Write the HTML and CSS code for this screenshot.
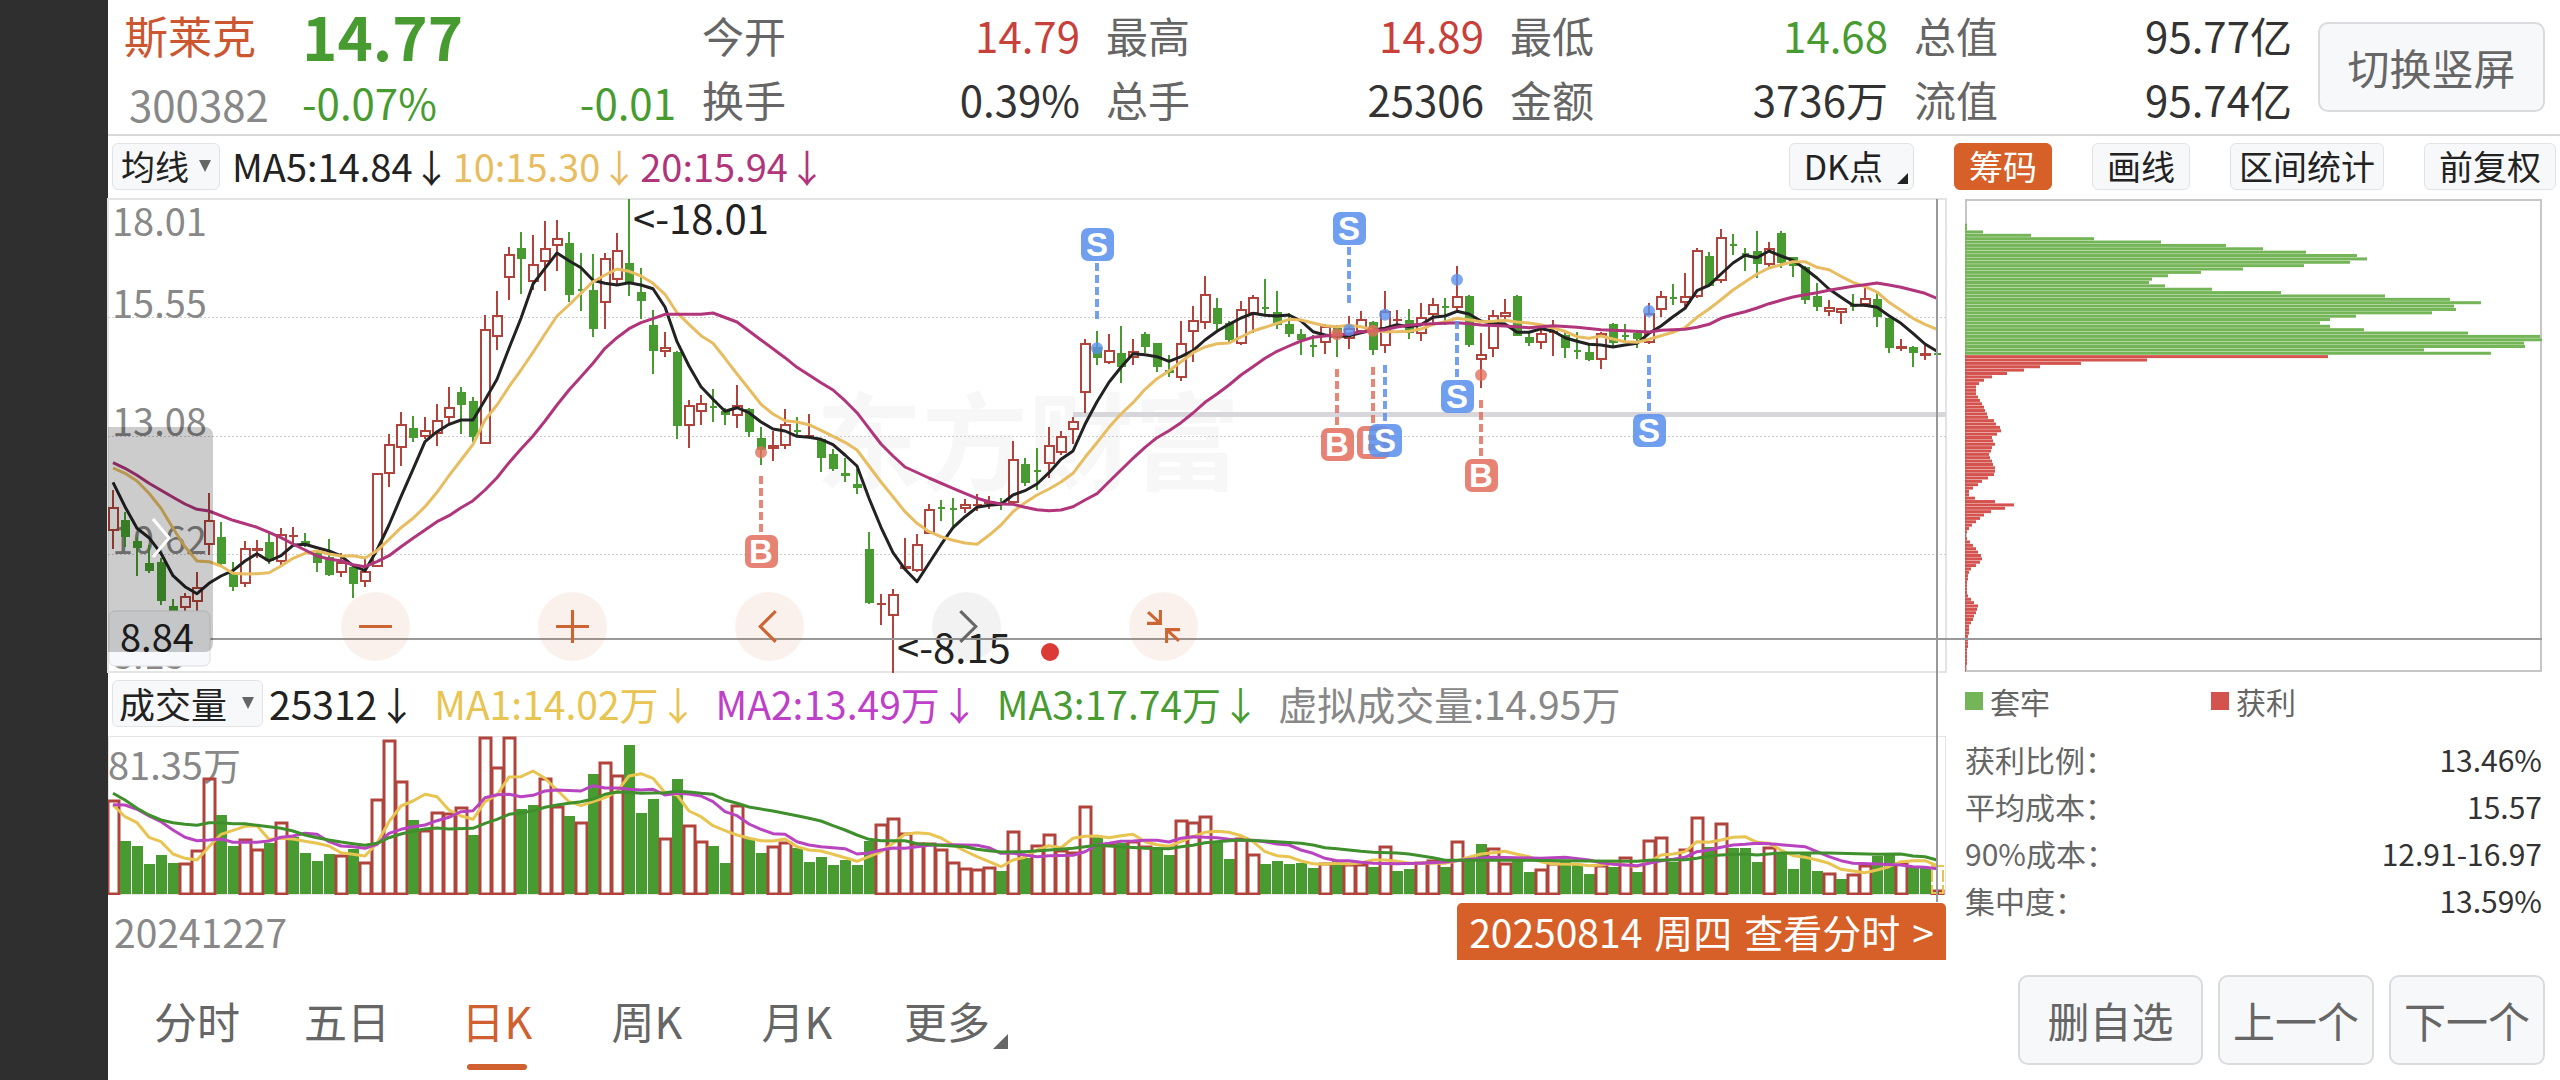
FILE: index.html
```
<!DOCTYPE html>
<html lang="zh-CN">
  <head>
    <meta charset="UTF-8" />
    <meta name="viewport" content="width=device-width, initial-scale=1.0" />
    <title>斯莱克 300382</title>
    <link rel="stylesheet" href="styles.css">
  </head>
  <body>
    <div class="edge"></div>
    <main class="page">
      <header class="quote">
        <div class="stock">
          <h1 class="name">斯莱克</h1>
          <span class="code">300382</span>
        </div>
        <div class="price down">
          <strong class="last">14.77</strong>
          <div class="change"><span>-0.07%</span><span>-0.01</span></div>
        </div>
        <div class="pair">
          <div class="cell"><span>今开</span><b class="up">14.79</b></div>
          <div class="cell"><span>换手</span><b>0.39%</b></div>
        </div>
        <div class="pair">
          <div class="cell"><span>最高</span><b class="up">14.89</b></div>
          <div class="cell"><span>总手</span><b>25306</b></div>
        </div>
        <div class="pair">
          <div class="cell"><span>最低</span><b class="down">14.68</b></div>
          <div class="cell"><span>金额</span><b>3736万</b></div>
        </div>
        <div class="pair">
          <div class="cell"><span>总值</span><b>95.77亿</b></div>
          <div class="cell"><span>流值</span><b>95.74亿</b></div>
        </div>
        <button class="btn rotate">切换竖屏</button>
      </header>

      <div class="toolbar">
        <span class="pick">
          <select class="chip" aria-label="主图指标"><option>均线</option></select>
        </span>
        <span class="ma">MA5:14.84↓</span>
        <span class="ma yellow">10:15.30↓</span>
        <span class="ma magenta">20:15.94↓</span>
        <div class="tools">
          <button class="chip dk">DK点</button>
          <button class="chip active">筹码</button>
          <button class="chip">画线</button>
          <button class="chip tight">区间统计</button>
          <button class="chip">前复权</button>
        </div>
      </div>

      <div class="board">
        <section class="charts">
          <div class="kline">
            <svg class="plot" id="kline" viewBox="0 0 1838 473"></svg>
            <div class="zoom">
              <button class="round" aria-label="缩小">
                <svg viewBox="0 0 34 34"><path d="M1 17H33" /></svg>
              </button>
              <button class="round" aria-label="放大">
                <svg viewBox="0 0 34 34"><path d="M1 17H33M17 1V33" /></svg>
              </button>
              <button class="round" aria-label="左移">
                <svg viewBox="0 0 34 34"><path d="M23 2L8 17L23 32" /></svg>
              </button>
              <button class="round off" aria-label="右移">
                <svg viewBox="0 0 34 34"><path d="M11 2L26 17L11 32" /></svg>
              </button>
              <button class="round" aria-label="收起">
                <svg viewBox="0 0 34 34"><path d="M2 3L14 14M14 1V14H1M32 31L20 20M20 33V20H33" /></svg>
              </button>
            </div>
            <button class="drawer" aria-label="展开侧栏">
              <svg viewBox="0 0 20 42"><path d="M2 2L18 21L2 40" /></svg>
            </button>
          </div>

          <div class="indicator">
            <span class="pick wide">
              <select class="chip" aria-label="副图指标"><option>成交量</option></select>
            </span>
            <span>25312↓</span>
            <span class="gold">MA1:14.02万↓</span>
            <span class="purple">MA2:13.49万↓</span>
            <span class="down">MA3:17.74万↓</span>
            <span class="grey">虚拟成交量:14.95万</span>
          </div>

          <svg class="plot" id="volume" viewBox="0 0 1838 159"></svg>

          <div class="dates">
            <span class="grey">20241227</span>
            <a class="detail" href="#"><span>20250814</span><span>周四</span><span>查看分时</span><span>&gt;</span></a>
          </div>
        </section>

        <aside class="chips">
          <svg class="plot" id="chips" viewBox="0 0 577 473"></svg>
          <div class="legend">
            <span class="key locked">套牢</span>
            <span class="key profit">获利</span>
          </div>
          <dl class="facts">
            <div><dt>获利比例：</dt><dd>13.46%</dd></div>
            <div><dt>平均成本：</dt><dd>15.57</dd></div>
            <div><dt>90%成本：</dt><dd>12.91-16.97</dd></div>
            <div><dt>集中度：</dt><dd>13.59%</dd></div>
          </dl>
        </aside>
      </div>

      <footer class="bottom">
        <nav class="tabs">
          <a href="#">分时</a>
          <a href="#">五日</a>
          <a href="#" class="current">日K</a>
          <a href="#">周K</a>
          <a href="#">月K</a>
          <a href="#" class="more">更多</a>
        </nav>
        <div class="actions">
          <button class="btn long">删自选</button>
          <button class="btn">上一个</button>
          <button class="btn">下一个</button>
        </div>
      </footer>
    </main>
    <script src="chart.js"></script>
  </body>
</html>
```
FILE: styles.css
```
* {
  box-sizing: border-box;
}
body {
  margin: 0;
  display: flex;
  min-height: 100vh;
  background: #fff;
  color: #222;
  font-family: "Noto Sans CJK SC", "Noto Sans", sans-serif;
  font-size: 38px;
  line-height: 1;
}
button,
select {
  font: inherit;
  color: inherit;
  margin: 0;
  padding: 0;
  cursor: pointer;
}
a {
  color: inherit;
  text-decoration: none;
}
.edge {
  flex: 0 0 108px;
  background: #2f2f2f;
}
.page {
  flex: 1;
  min-width: 0;
}
.up {
  color: #c8403a;
}
.down {
  color: #489b30;
}
.grey {
  color: #888;
}
.yellow {
  color: #e8bd62;
}
.gold {
  color: #e8c450;
}
.magenta {
  color: #b0357a;
}
.purple {
  color: #bf40c8;
}

/* quote header */
.quote {
  display: grid;
  grid-template-columns: 152px 374px repeat(4, minmax(0, 1fr)) 227px;
  column-gap: 26px;
  align-items: center;
  height: 136px;
  padding: 0 15px 0 16px;
  border-bottom: 2px solid #d8d8d8;
  font-size: 42px;
  white-space: nowrap;
}
.stock,
.price,
.pair {
  display: grid;
  grid-template-rows: 64px 64px;
  align-items: center;
}
.name {
  margin: 0;
  font-size: 44px;
  font-weight: 400;
  color: #cc5630;
}
.code {
  padding-left: 5px;
  padding-top: 10px;
  color: #888;
}
.last {
  font-size: 60px;
  font-weight: 700;
}
.change {
  display: flex;
  justify-content: space-between;
  padding-top: 6px;
}
.cell {
  display: flex;
  justify-content: space-between;
  color: #666;
}
.cell b {
  font-weight: 400;
  color: #333;
}
.cell b.up {
  color: #c8403a;
}
.cell b.down {
  color: #489b30;
}
.btn {
  width: 156px;
  height: 90px;
  border: 2px solid #d9dbde;
  border-radius: 10px;
  background: #f7f8fa;
  color: #666;
  font-size: 42px;
}
.rotate {
  width: 100%;
}
.long {
  width: 185px;
}

/* toolbar */
.toolbar {
  display: flex;
  align-items: center;
  gap: 2px;
  height: 63px;
  padding: 0 4px 3px;
  white-space: nowrap;
}
.chip {
  appearance: none;
  height: 47px;
  padding: 0 14px;
  border: 1px solid #e2e3e6;
  border-radius: 6px;
  background: #f7f8fa;
  font-size: 34px;
  line-height: 1;
}
.chip.active {
  border-color: #d75f28;
  background: #d75f28;
  color: #fff;
}
.chip.tight {
  padding: 0 8px;
}
.pick {
  display: grid;
  align-items: center;
  margin-right: 10px;
}
.pick .chip {
  grid-area: 1 / 1;
  width: 108px;
  padding: 0 8px;
}
.pick.wide .chip {
  width: 151px;
  padding: 0 6px;
  font-size: 36px;
}
.pick::after {
  content: "";
  grid-area: 1 / 1;
  justify-self: end;
  margin-right: 9px;
  border: 6px solid transparent;
  border-top: 12px solid #666;
  border-bottom: 0;
  pointer-events: none;
}
.tools {
  display: flex;
  gap: 40px;
  margin-left: auto;
}
.dk {
  display: flex;
  align-items: center;
  gap: 14px;
  padding-right: 5px;
}
.dk::after {
  content: "";
  align-self: flex-end;
  margin-bottom: 5px;
  border-left: 11px solid transparent;
  border-bottom: 11px solid #222;
}

/* charts */
.board {
  display: grid;
  grid-template-columns: minmax(0, 1fr) 577px;
  gap: 19px;
  padding-right: 18px;
}
.plot {
  display: block;
  width: 100%;
  font-size: 38px;
}
.kline {
  position: relative;
  z-index: 1;
}
#kline {
  overflow: visible;
}
.frame {
  fill: none;
  stroke: #e4e4e4;
  stroke-width: 2;
}
#chips .frame {
  stroke: #c6c6c6;
}
.gridline {
  stroke: #ccc;
  stroke-dasharray: 2 2;
}
.watermark {
  font-size: 106px;
  font-weight: 700;
  fill: #f7f7f7;
}
.support {
  fill: #d6d6db;
}
.axis {
  fill: #888;
}
.note {
  fill: #222;
}
.extreme {
  font-size: 40px;
}
.cross {
  stroke: #999;
  stroke-width: 2;
}
.rise {
  fill: none;
  stroke: #b0443c;
  stroke-width: 2;
}
.fall {
  fill: #489b30;
  stroke: #489b30;
  stroke-width: 2;
}
.bar-rise {
  fill: none;
  stroke: #b0443c;
  stroke-width: 3;
}
.bar-fall {
  fill: #489b30;
}
.line {
  fill: none;
  stroke-width: 3;
  stroke-linejoin: round;
}
.line.ma5 { stroke: #222; }
.line.ma10 { stroke: #e8bd62; }
.line.ma20 { stroke: #b0357a; }
.line.v1 { stroke: #e8c450; }
.line.v2 { stroke: #b944c0; }
.line.v3 { stroke: #3f8f2c; }
.tag {
  fill: #fff;
  font-family: "Liberation Sans", sans-serif;
  font-size: 33px;
  font-weight: 700;
  text-anchor: middle;
}
.buy { fill: #e4705f; stroke: #e4705f; }
.sell { fill: #5b91ee; stroke: #5b91ee; }
.lead {
  stroke-width: 4;
  stroke-dasharray: 8 4;
  opacity: 0.85;
}
.dot {
  stroke: none;
  opacity: 0.8;
}
.box {
  stroke: none;
  opacity: 0.87;
}
.alert {
  fill: #dc3a34;
}
.cursor {
  fill: #f7f8fb;
  stroke: #dcdde0;
}
.forecast {
  fill: none;
  stroke: #e8c450;
  stroke-width: 2;
  stroke-dasharray: 12 3;
}
.locked-bar { fill: #74b557; }
.profit-bar { fill: #d5534e; }

.zoom {
  position: absolute;
  left: 233px;
  bottom: 11px;
  display: flex;
  gap: 128px;
}
.round {
  width: 69px;
  height: 69px;
  padding: 17px;
  border: 0;
  border-radius: 50%;
  background: rgba(215, 95, 40, 0.09);
}
.round svg {
  display: block;
  fill: none;
  stroke: #cb6634;
  stroke-width: 3;
}
.round.off {
  background: rgba(0, 0, 0, 0.05);
}
.round.off svg {
  stroke: #666;
}
.drawer {
  position: absolute;
  left: 0;
  bottom: 20px;
  width: 105px;
  height: 225px;
  border: 0;
  border-radius: 0 8px 8px 0;
  background: rgba(0, 0, 0, 0.2);
}
.drawer svg {
  width: 20px;
  fill: none;
  stroke: #fff;
  stroke-width: 3;
}
.indicator {
  display: flex;
  align-items: center;
  gap: 18px;
  height: 64px;
  padding: 0 0 2px 4px;
  font-size: 39px;
  white-space: nowrap;
}
.indicator .pick {
  margin-right: -12px;
}
.dates {
  display: flex;
  justify-content: space-between;
  align-items: center;
  padding: 8px 0 15px 6px;
  font-size: 39px;
}
.detail {
  display: flex;
  align-items: center;
  gap: 12px;
  height: 57px;
  padding: 0 12px;
  border-radius: 5px 5px 0 0;
  background: #d75f28;
  color: #fff;
}

/* chip distribution */
.legend {
  display: flex;
  padding: 14px 0;
  font-size: 30px;
  color: #666;
}
.key {
  display: flex;
  align-items: center;
  gap: 7px;
  width: 246px;
}
.key::before {
  content: "";
  width: 18px;
  height: 18px;
}
.locked::before {
  background: #74b557;
}
.profit::before {
  background: #d5534e;
}
.facts {
  margin: 0;
  padding-top: 6px;
  font-size: 30px;
  line-height: 47px;
}
.facts div {
  display: flex;
  justify-content: space-between;
}
.facts dt {
  color: #666;
}
.facts dd {
  margin: 0;
  color: #333;
}

/* bottom bar */
.bottom {
  display: flex;
  justify-content: space-between;
  align-items: center;
  padding: 0 15px 15px 14px;
}
.tabs {
  display: flex;
}
.tabs a {
  position: relative;
  width: 150px;
  line-height: 88px;
  text-align: center;
  font-size: 43px;
  color: #666;
}
.tabs .current {
  color: #d0602f;
}
.tabs .current::after {
  content: "";
  position: absolute;
  left: 45px;
  bottom: -6px;
  width: 60px;
  height: 6px;
  border-radius: 3px;
  background: #d0602f;
}
.tabs .more::after {
  content: "";
  position: absolute;
  right: 14px;
  bottom: 15px;
  border-left: 15px solid transparent;
  border-bottom: 15px solid #666;
}
.actions {
  display: flex;
  gap: 15px;
}
```
FILE: chart.js
```
const STEP = 12;
const FIRST = 5;

// colour, high, body top, body bottom, low (one unit = a third of a pixel)
const candles = `r900,950,1024,1078 g965,990,1040,1070 g1040,1052,1075,1158 g1065,1120,1142,1148 g1105,1117,1233,1246
g1228,1248,1275,1280 r1210,1218,1255,1262 r1145,1190,1237,1262 r908,990,1066,1094 g995,1041,1121,1125
g1117,1150,1192,1203 r1053,1073,1181,1192 r1050,1073,1084,1105 g1025,1056,1112,1122 r1015,1031,1117,1132
r1010,1036,1040,1065 g1030,1052,1065,1070 g1080,1090,1118,1146 g1047,1100,1155,1158 r1090,1117,1148,1162
g1125,1131,1182,1224 r1105,1143,1175,1190 r848,848,1130,1132 r732,763,853,890 r667,702,774,828
g678,715,745,756 r680,720,740,748 r642,691,733,768 r590,650,683,700 g592,605,644,732
g622,634,741,756 r376,418,763,763 r302,374,442,480 r170,193,263,330 g125,174,206,312
r134,221,275,300 r94,174,216,302 r90,145,167,244 g127,158,316,336 g190,297,301,362
g192,300,417,441 r190,204,338,417 r130,180,270,285 g27,220,278,319 g234,306,333,386
g360,405,482,552 r426,471,485,500 g482,485,708,748 r630,646,709,775 r614,638,665,706
g598,649,653,696 g655,662,674,706 r584,645,679,713 g654,656,726,740 g710,743,780,824
r722,766,778,812 r656,702,769,777 g680,721,725,738 r672,736,742,745 g745,748,805,846
g778,793,837,843 g804,850,858,875 g838,881,893,911 g1025,1077,1239,1242 r1213,1238,1242,1305
r1198,1211,1278,1449 r1045,1128,1138,1141 r1032,1062,1142,1146 r942,957,1031,1033 g931,952,956,993
g923,953,957,1008 r926,943,957,970 r911,942,948,963 r918,932,942,957 g925,935,942,961
r753,806,940,945 g803,823,880,888 g773,840,845,900 r712,765,822,864 r722,738,790,795
r682,692,720,761 r447,460,610,669 g423,470,503,524 r432,480,520,522 g407,490,530,578
r446,483,505,524 g427,433,471,490 g460,460,530,546 g495,541,550,560 r393,460,563,573
r348,390,427,515 r259,313,399,418 g323,353,402,422 g393,400,450,460 r333,357,463,465
r314,320,372,430 g266,350,355,374 g303,365,406,417 g370,403,431,441 g418,433,450,496
g435,466,470,502 r403,408,460,493 g405,415,438,500 r378,415,448,478 r363,387,425,430
g393,396,480,496 r303,362,469,488 r361,387,392,405 g357,390,430,446 r338,380,433,453
r325,342,376,402 g325,347,351,405 r229,318,355,360 g316,318,466,470 r429,491,511,594
r361,374,478,502 r328,366,381,386 g316,318,437,438 g425,440,458,469 r418,430,459,476
r390,424,430,497 g425,436,474,503 g426,480,484,506 g463,486,509,512 r425,430,511,538
g400,401,460,470 g403,436,441,455 g425,430,447,475 r338,370,460,461 r303,318,360,380
g282,320,325,345 r250,318,340,350 r173,180,322,325 g185,197,287,290 r118,141,274,278
g131,161,165,196 g174,190,196,243 g122,184,222,264 r156,173,224,235 g123,129,220,234
g200,202,227,260 g228,231,330,342 g279,318,350,362 r331,351,367,378 r354,354,370,402
g311,346,351,362 r293,323,345,350 g310,326,380,411 g383,385,474,488 r446,468,478,482
g468,470,489,531 r465,490,499,510 g478,490,494,506`.split(/\s+/);

const ma5 = [877,950,1015,1043,1090,1157,1190,1211,1180,1158,1142,1113,1091,1113,1097,1066,1063,1073,1083,1098,1127,1142,1080,1005,920,838,755,725,703,690,690,630,568,475,385,282,235,189,212,233,271,280,285,278,285,296,351,455,528,590,628,664,653,668,696,717,723,739,742,748,764,795,828,925,1012,1088,1138,1175,1120,1064,1013,980,952,946,943,915,902,882,848,808,783,703,635,577,532,491,494,500,514,500,482,450,424,403,384,370,376,378,375,393,425,435,440,437,428,420,415,404,410,404,382,378,364,372,393,400,402,427,427,416,423,443,454,463,465,471,465,460,430,408,380,355,302,286,252,219,196,203,183,198,211,236,264,297,322,346,346,352,377,400,430,462,484];
const ma10 = [834,850,873,910,955,1015,1070,1113,1115,1128,1150,1152,1151,1148,1128,1105,1090,1083,1092,1098,1097,1104,1082,1048,1013,985,950,907,857,810,763,690,645,590,540,487,432,378,345,310,275,255,237,244,258,280,313,368,403,437,460,505,552,597,643,672,692,696,704,721,739,757,780,828,876,920,965,1000,1025,1040,1051,1059,1063,1036,1005,965,938,915,897,876,850,802,758,712,672,638,598,566,543,515,488,471,461,459,441,423,412,400,388,390,399,407,410,406,410,420,425,425,424,417,403,395,385,389,395,394,391,396,399,404,414,424,440,445,438,447,455,457,448,437,427,413,382,357,329,300,276,252,234,224,215,215,232,239,259,277,290,306,337,361,385,403,418];

// turning points only: index:value
const ma20 = "0:818 1:835 2:856 3:880 4:901 5:922 6:942 7:958 8:963 10:991 11:1001 12:1012 13:1027 14:1043 15:1062 16:1080 17:1098 18:1107 19:1113 20:1124 21:1130 22:1115 23:1097 24:1070 25:1045 26:1020 27:995 28:977 29:953 30:932 31:900 32:863 33:818 34:777 35:738 36:693 37:645 38:600 39:560 40:520 41:475 42:443 43:416 44:398 45:386 46:373 49:373 50:369 52:396 54:450 56:503 57:532 59:578 60:600 61:632 62:668 63:715 64:762 65:798 66:831 68:864 70:895 72:925 73:935 74:942 75:943 76:952 77:959 78:962 79:960 80:950 81:930 82:911 83:875 84:840 85:805 86:772 87:743 88:722 89:698 90:669 91:637 92:612 93:585 94:555 95:530 96:505 97:484 98:468 99:453 100:442 101:438 102:434 103:432 104:425 105:422 106:419 107:411 108:406 109:403 110:401 112:398 113:401 114:405 116:408 118:413 120:407 122:412 124:419 126:422 128:426 129:421 131:418 132:412 133:403 134:385 135:374 136:365 137:354 138:341 139:331 140:321 141:314 142:308 143:301 144:295 145:289 146:284 147:279 148:285 149:292 150:301 151:310 152:325";

const volumes = "r390 g513 g528 g583 g555 g580 r580 r540 r325 g435 g528 r508 r536 g519 r457 g500 g550 g574 g553 r556 g536 r576 r388 r211 r334 g450 r480 r426 r430 r412 g495 r200 r292 r202 g417 g405 r325 r407 g438 r456 g313 r275 r315 g225 g428 g387 r503 g328 r464 r514 g527 g580 r405 g505 g549 r528 r515 g534 g576 g562 g585 g570 g585 g513 r462 r444 r488 r520 r518 r536 r576 r594 r598 r590 g602 r483 g565 r524 r492 r540 r545 r408 g497 r523 g520 r512 r528 g533 g555 r450 r456 r438 g515 g568 r505 r552 g581 g573 g583 g580 g594 r580 g572 r582 r582 g592 r527 g603 g597 r577 r570 g590 r512 g570 g522 r534 r578 g565 g606 r598 r580 g570 g586 g612 r586 g590 r560 g605 r511 r501 g575 r538 r441 g530 r459 g535 g535 g575 r532 g545 g597 g550 g603 r608 g627 r613 r585 g558 g548 r580 g592 g590 r660".split(" ");

const vol1 = "0:405 1:440 2:458 3:502 4:515 5:552 6:565 7:570 8:530 9:493 10:481 11:469 12:467 13:508 14:505 15:507 16:514 17:520 18:528 19:548 20:553 21:558 22:520 23:455 24:408 25:393 26:373 27:380 28:420 29:438 30:448 31:395 32:375 33:321 34:320 35:303 36:325 37:360 38:395 39:407 40:395 41:383 42:365 43:318 44:311 45:325 46:368 47:375 48:423 49:440 50:467 51:482 52:495 53:505 54:512 55:513 56:507 57:530 58:540 59:543 60:553 61:563 62:574 63:560 64:545 65:520 66:493 67:488 68:491 69:504 70:525 71:543 72:560 73:575 74:590 75:570 76:562 77:540 78:527 79:533 80:505 81:499 82:498 83:503 84:497 85:493 86:515 87:524 88:529 89:515 90:500 91:487 92:484 93:487 94:497 95:515 96:545 97:557 98:560 99:573 100:581 101:583 102:580 103:582 104:579 105:570 106:570 107:574 108:580 111:580 112:572 113:562 114:552 115:548 116:544 117:553 118:560 119:575 120:582 122:583 123:587 124:585 125:580 126:585 127:590 128:575 129:555 130:552 131:545 132:515 133:517 134:510 135:502 136:500 137:517 138:520 139:540 140:557 141:562 142:570 143:580 144:598 145:603 146:608 147:600 148:590 149:575 150:572 151:572 152:587";
const vol2 = "0:404 1:405 2:418 3:438 4:455 5:480 6:502 7:512 8:510 9:507 10:517 12:517 13:513 14:502 15:498 16:490 17:493 18:515 19:528 20:530 21:535 22:523 23:490 24:478 25:470 26:465 27:452 28:442 29:425 30:422 31:383 32:374 33:373 34:380 35:376 36:363 37:360 39:363 40:347 41:354 42:354 43:358 44:360 45:358 46:375 47:370 48:372 49:378 50:395 51:425 52:437 53:462 54:478 55:491 56:493 57:515 58:525 59:530 60:533 61:536 62:552 63:549 64:540 65:534 66:535 67:530 68:526 70:524 72:526 73:533 74:550 75:550 76:555 77:560 78:557 80:556 81:545 82:525 83:520 84:514 85:513 86:511 87:511 88:516 89:505 90:500 91:502 92:503 93:508 94:511 95:511 96:515 97:522 98:525 99:540 100:550 101:565 102:572 103:572 104:577 105:580 107:581 109:580 111:576 113:568 115:562 117:563 119:565 121:562 123:570 124:578 125:583 127:587 128:580 129:572 130:568 131:562 132:545 133:540 134:532 135:525 136:523 137:520 138:521 139:524 141:530 142:545 143:560 144:572 145:580 147:582 149:585 150:590 151:592 152:596";
const vol3 = "0:370 1:390 2:415 3:435 4:450 5:458 6:463 7:466 8:458 9:458 10:461 11:461 12:466 13:470 14:475 15:483 16:495 17:503 18:510 19:516 20:521 21:526 22:520 23:503 24:492 25:484 26:477 27:474 28:477 30:475 31:460 32:448 33:433 34:428 35:423 36:412 37:405 38:400 39:395 40:387 41:373 42:366 43:367 44:370 46:368 47:364 48:366 49:370 50:373 51:390 52:400 53:411 55:423 57:437 58:445 59:453 60:467 61:480 62:495 63:508 64:512 66:512 67:521 69:526 71:530 72:538 73:542 74:546 76:545 78:540 80:535 82:526 84:530 86:535 88:536 89:530 90:526 91:518 92:515 93:512 94:510 96:513 97:515 99:520 100:525 101:533 102:536 104:544 105:547 107:549 108:552 110:563 111:571 117:571 123:573 127:574 128:571 131:569 132:565 133:558 134:555 136:552 137:555 139:549 143:549 147:553 149:552 150:558 151:560 152:570";

// [candle, side, dot, box]
const marks = [
  [54, "B", 787, 1083],
  [82, "S", 475, 162],
  [102, "B", 433, 762],
  [103, "S", 420, 114],
  [105, "B", 422, 756],
  [106, "S", 374, 750],
  [112, "S", 269, 618],
  [114, "B", 555, 855],
  [128, "S", 363, 720],
];

// bar lengths from the top price down
const locked = [2,2,18,66,129,196,261,298,341,392,402,385,339,278,236,203,187,184,200,247,316,420,485,516,489,491,467,391,365,355,365,399,503,575,577,559,560,459,526];
const profit = [363,182,116,75,59,42,27,19,14,11,11,11,13,15,17,19,20,22,23,29,31,35,36,32,27,28,30,27,26,24,25,27,28,30,30,29,23,17,13,8,4,4,10,30,49,40,26,19,15,11,7,4,2,1,2,5,8,11,13,16,17,15,11,6,4,3,3,2,2,2,2,3,6,9,13,12,11,9,8,6,4,4,4,3,3,3,3,2,2,2,2,2,1,1];

const x = (i) => FIRST + i * STEP;
const points = (text) => text.split(" ").map((p) => p.split(":").map(Number));

function line(list, y, name) {
  const d = list.map(([i, v]) => `${x(i)},${y(v).toFixed(1)}`).join(" ");
  return `<polyline class="line ${name}" points="${d}" />`;
}

function drawKline() {
  const y = (v) => (v - 27) / 3;
  let out = `<rect class="frame" x="0" y="0" width="1838" height="473" />`;
  out += `<text class="watermark" x="708" y="283">东方财富</text>`;
  [118, 237, 355].forEach((g) => {
    out += `<line class="gridline" x1="0" x2="1838" y1="${g}.5" y2="${g}.5" />`;
  });
  out += `<rect class="support" x="965" y="213" width="873" height="5" />`;
  [["18.01", 37], ["15.55", 119], ["13.08", 237], ["10.62", 355], ["8.15", 470]].forEach(([t, ty]) => {
    out += `<text class="axis" x="4" y="${ty}">${t}</text>`;
  });

  candles.forEach((c, i) => {
    const rise = c[0] === "r";
    const [hi, top, bot, lo] = c.slice(1).split(",").map((v) => Math.round(y(+v)));
    const cx = x(i);
    const h = Math.max(bot - top - 2, 0);
    const body = rise ? `M${cx - 4} ${top + 1}h9v${h}h-9z` : `M${cx - 3} ${top + 1}h7v${h}h-7z`;
    out += `<path class="${rise ? "rise" : "fall"}" d="M${cx} ${hi}V${top}M${cx} ${bot}V${lo}${body}" />`;
  });
  out += line(ma5.map((v, i) => [i, v]), y, "ma5");
  out += line(ma10.map((v, i) => [i, v]), y, "ma10");
  out += line(points(ma20), y, "ma20");

  marks.forEach(([i, side, dot, box]) => {
    const cx = x(i);
    const name = side === "B" ? "buy" : "sell";
    const above = box < dot;
    const from = above ? box + 57 : box - 225;
    out += `<circle class="${name} dot" cx="${cx}" cy="${y(dot)}" r="6" />
      <line class="${name} lead" x1="${cx}" x2="${cx}" y1="${y(from)}" y2="${y(from + 168)}" />
      <rect class="${name} box" x="${cx - 16}" y="${y(box) - 16}" width="33" height="33" rx="7" />
      <text class="tag" x="${cx}" y="${y(box) + 12}">${side}</text>`;
  });

  out += `<text class="note extreme" x="525" y="35">&lt;-18.01</text>`;
  out += `<text class="note extreme" x="789" y="464">&lt;-8.15</text>`;
  out += `<circle class="alert" cx="942" cy="453" r="9" />`;
  out += `<line class="cross" x1="102" x2="2434" y1="440" y2="440" />`;
  out += `<line class="cross" x1="1829" x2="1829" y1="0" y2="703" />`;
  out += `<rect class="cursor" x="1" y="412" width="101" height="55" rx="6" />`;
  out += `<text class="note" x="12" y="453">8.84</text>`;
  document.getElementById("kline").innerHTML = out;
}

function drawVolume() {
  const y = (v) => (v - 198) / 3;
  let out = `<rect class="frame" x="0" y="0" width="1838" height="159" />`;
  out += `<text class="axis" x="0" y="44">81.35万</text>`;
  volumes.forEach((v, i) => {
    const top = Math.round(y(+v.slice(1)));
    if (v[0] === "r") {
      out += `<rect class="bar-rise" x="${x(i) - 5}" y="${top + 1}" width="11" height="${157 - top}" />`;
    } else {
      out += `<rect class="bar-fall" x="${x(i) - 5}" y="${top}" width="11" height="${158 - top}" />`;
    }
  });
  out += `<rect class="forecast" x="1824" y="130" width="11" height="27" />`;
  out += line(points(vol1), y, "v1");
  out += line(points(vol2), y, "v2");
  out += line(points(vol3), y, "v3");
  document.getElementById("volume").innerHTML = out;
}

function drawChips() {
  const pitch = 3.37;
  let out = `<rect class="frame" x="1" y="1" width="575" height="471" />`;
  locked.concat(profit).forEach((w, i) => {
    const name = i < locked.length ? "locked-bar" : "profit-bar";
    out += `<rect class="${name}" x="0" y="${(24.7 + i * pitch).toFixed(2)}" width="${w}" height="3" />`;
  });
  document.getElementById("chips").innerHTML = out;
}

drawKline();
drawVolume();
drawChips();
```
